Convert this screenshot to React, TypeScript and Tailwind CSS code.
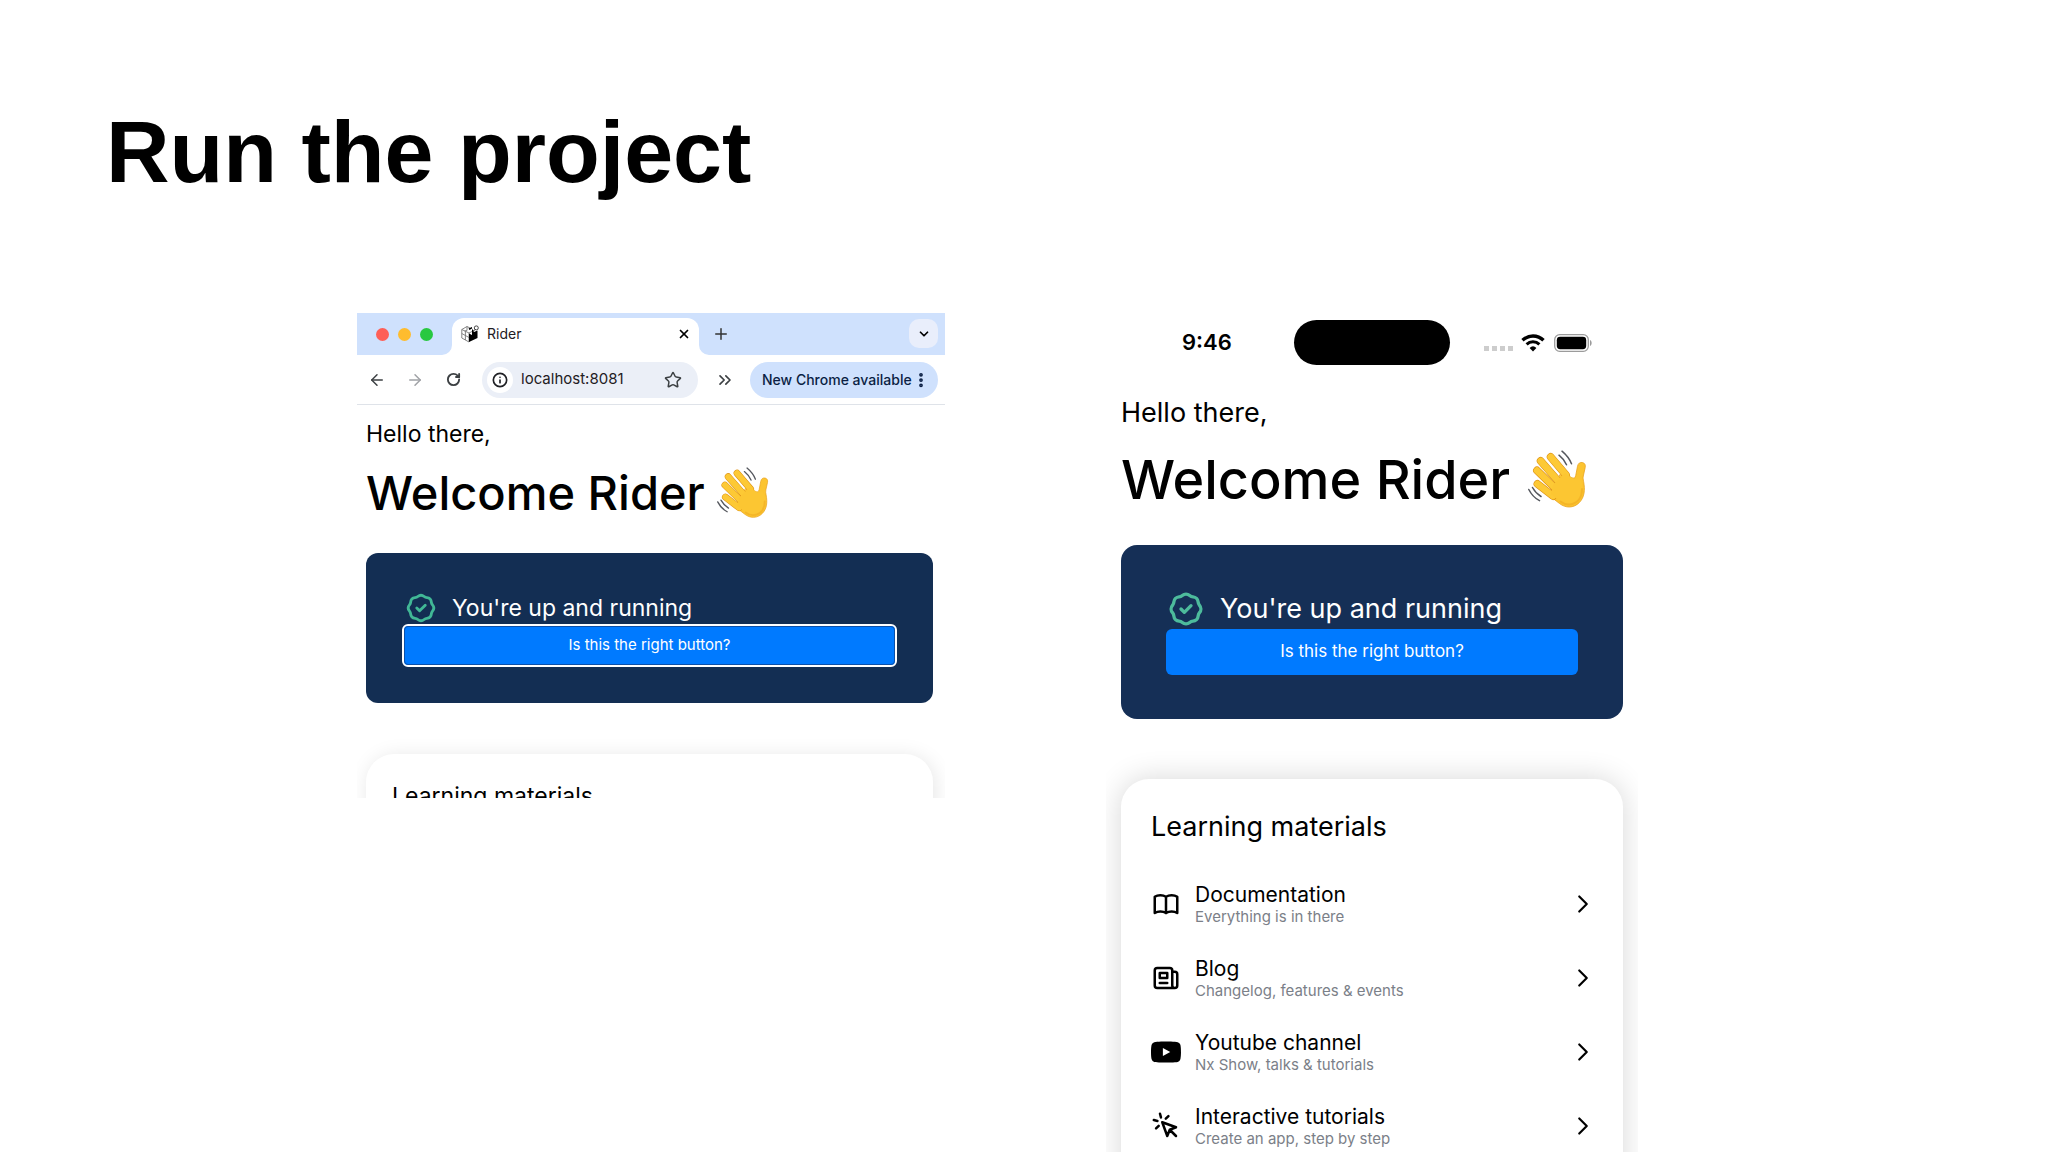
import type { ReactNode } from "react";
import {
  ArrowLeft,
  ArrowRight,
  ChevronDown,
  ChevronRight,
  ChevronsRight,
  EllipsisVertical,
  Info,
  Plus,
  RotateCw,
  Star,
  X,
} from "lucide-react";

type Material = {
  title: string;
  description: string;
  icon: ReactNode;
};

function OutlineIcon({ d, className }: { d: string; className: string }) {
  return (
    <svg
      className={className}
      viewBox="0 0 24 24"
      fill="none"
      stroke="currentColor"
      strokeWidth="2"
      strokeLinecap="round"
      strokeLinejoin="round"
      aria-hidden="true"
    >
      <path d={d} />
    </svg>
  );
}

const BADGE =
  "M9 12l2 2 4-4M7.835 4.697a3.42 3.42 0 001.946-.806 3.42 3.42 0 014.438 0 3.42 3.42 0 001.946.806 3.42 3.42 0 013.138 3.138 3.42 3.42 0 00.806 1.946 3.42 3.42 0 010 4.438 3.42 3.42 0 00-.806 1.946 3.42 3.42 0 01-3.138 3.138 3.42 3.42 0 00-1.946.806 3.42 3.42 0 01-4.438 0 3.42 3.42 0 00-1.946-.806 3.42 3.42 0 01-3.138-3.138 3.42 3.42 0 00-.806-1.946 3.42 3.42 0 010-4.438 3.42 3.42 0 00.806-1.946 3.42 3.42 0 013.138-3.138z";
const BOOK =
  "M12 6.253v13m0-13C10.832 5.477 9.246 5 7.5 5S4.168 5.477 3 6.253v13C4.168 18.477 5.754 18 7.5 18s3.332.477 4.5 1.253m0-13C13.168 5.477 14.754 5 16.5 5c1.747 0 3.332.477 4.5 1.253v13C19.832 18.477 18.247 18 16.5 18c-1.746 0-3.332.477-4.5 1.253";
const NEWSPAPER =
  "M19 20H5a2 2 0 01-2-2V6a2 2 0 012-2h10a2 2 0 012 2v1m2 13a2 2 0 01-2-2V7m2 13a2 2 0 002-2V9a2 2 0 00-2-2h-2m-4-3H9M7 16h6M7 8h6v4H7V8z";
const CURSOR =
  "M15 15l-2 5L9 9l11 4-5 2zm0 0l5 5M7.188 2.239l.777 2.897M5.136 7.965l-2.898-.777M13.95 4.05l-2.122 2.122m-5.657 5.656l-2.12 2.122";

const materials: Material[] = [
  {
    title: "Documentation",
    description: "Everything is in there",
    icon: <OutlineIcon d={BOOK} className="size-[30px]" />,
  },
  {
    title: "Blog",
    description: "Changelog, features & events",
    icon: <OutlineIcon d={NEWSPAPER} className="size-[30px]" />,
  },
  {
    title: "Youtube channel",
    description: "Nx Show, talks & tutorials",
    icon: (
      <svg className="size-[30px]" viewBox="0 0 24 24" fill="currentColor" aria-hidden="true">
        <path d="M23.5 6.2a3 3 0 00-2.1-2.1C19.5 3.6 12 3.6 12 3.6s-7.5 0-9.4.5A3 3 0 00.5 6.2C0 8.1 0 12 0 12s0 3.9.5 5.8a3 3 0 002.1 2.1c1.9.5 9.4.5 9.4.5s7.5 0 9.4-.5a3 3 0 002.1-2.1c.5-1.9.5-5.8.5-5.8s0-3.9-.5-5.8zM9.5 15.2V8.800l5.900 3.200z" />
      </svg>
    ),
  },
  {
    title: "Interactive tutorials",
    description: "Create an app, step by step",
    icon: <OutlineIcon d={CURSOR} className="size-[30px]" />,
  },
];

const FINGERS = [
  "M22.7 7L38 25",
  "M12.7 11L31 32",
  "M9 20.500L27 38",
  "M9.500 34L25 46",
];

function WavingHand({ className }: { className: string }) {
  return (
    <svg className={className} viewBox="0 0 60 60" role="img" aria-label="waving hand" strokeLinecap="round">
      <path
        d="M34 22l9.500 5.500c2.200 1.300 3.700.6 4.200-1.800l1.800-9.400c.6-3 2.500-4.300 4.900-3.800 2.500.5 3.300 2.600 2.800 5l-1.900 8.500c-.4 1.900-.1 3.500.3 5.500 1.600 8.500 1 15.800-4.400 21.200-5.600 5.600-13.600 5.600-19.700.8L20.500 45z"
        fill="#fcc430"
        stroke="#e9a21d"
        strokeWidth="0.800"
      />
      {FINGERS.map((d) => (
        <g key={d} fill="none">
          <path d={d} stroke="#dd9216" strokeWidth="7.800" />
          <path d={d} stroke="#fdc935" strokeWidth="6.600" />
        </g>
      ))}
      <path
        d="M37 23l7 5c3 2 6 1.500 7-1l3 6c1.500 8 .6 14-3.800 18.500-4.900 4.900-12 4.600-17.200.5L23 44l2-9 5-5z"
        fill="#fcc632"
      />
      <path d="M54 39c0 8-4 14.500-12.500 15.500-3 .3-6-.8-9-3" fill="none" stroke="#efaa20" strokeWidth="2" opacity="0.6" />
      <path
        d="M34 1.200c4.300 3.600 7.500 7.600 9.500 12.600M31 5.200c3.300 2.600 5.800 5.800 7.500 9.600M.8 39.500c2.500 5 6 8.700 10.700 11.200M4.500 37.500c2.200 4 5 6.900 8.500 9"
        fill="none"
        stroke="#55585e"
        strokeWidth="1.500"
      />
    </svg>
  );
}

function Favicon() {
  return (
    <svg className="size-[18px]" viewBox="0 0 18 18" fill="none" aria-hidden="true">
      <path
        d="M.8 4.500L6 1.500 9 3M.8 4.500V13L8 17V8zM8 8l3-1.500M.8 8.500L8 12.500M4.400 6.200V15M6 1.500v4L3.500 6"
        stroke="#777"
        strokeWidth="0.900"
      />
      <path d="M8 8.500l3 1.500V3.500L8.500 5 7.500 3.500 11 2v1.500L13 7l3.500-1.500V13L8 17z" fill="#000" />
      <circle cx="15.300" cy="2.900" r="2" fill="#fff" stroke="#333" strokeWidth="0.900" />
      <path d="M12 6l2.500-1.500" stroke="#333" strokeWidth="0.900" />
    </svg>
  );
}

function BrowserWindow() {
  return (
    <section className="col-start-2 h-[485px] self-start overflow-hidden bg-white">
      <div className="flex h-[42px] items-end bg-[#cfe1fd]">
        <div className="flex h-full w-[95px] items-center gap-[9px] pl-[19px]">
          <span className="size-[13px] rounded-full bg-[#fe5f57]" />
          <span className="size-[13px] rounded-full bg-[#febc2e]" />
          <span className="size-[13px] rounded-full bg-[#28c840]" />
        </div>
        <div className="relative flex h-[37px] w-[247px] items-center rounded-t-xl bg-white pb-[6px] pl-[9px]">
          <svg className="absolute bottom-0 -left-[10px] size-[10px]" viewBox="0 0 10 10" aria-hidden="true">
            <path d="M10 0v10H0A10 10 0 0010 0z" fill="#fff" />
          </svg>
          <svg className="absolute -right-[10px] bottom-0 size-[10px]" viewBox="0 0 10 10" aria-hidden="true">
            <path d="M0 0v10h10A10 10 0 010 0z" fill="#fff" />
          </svg>
          <Favicon />
          <span className="ml-2 text-sm text-[#1f2024]">Rider</span>
          <button className="mr-2 ml-auto" aria-label="Close tab">
            <X className="size-[14px]" strokeWidth={3} />
          </button>
        </div>
        <button className="mb-3 ml-[13px] text-[#333]" aria-label="New tab">
          <Plus className="size-[18px]" strokeWidth={2} />
        </button>
        <button
          className="mr-[7px] mb-[7px] ml-auto flex size-[29px] items-center justify-center rounded-[10px] bg-[#e9eefb]"
          aria-label="Search tabs"
        >
          <ChevronDown className="size-[14px]" strokeWidth={3} />
        </button>
      </div>

      <div className="flex h-[50px] items-center border-b border-[#dfe3e9] pr-[7px] pl-[11px] text-[#3c4043]">
        <button aria-label="Back">
          <ArrowLeft className="size-[18px]" strokeWidth={2} />
        </button>
        <button className="ml-5 text-[#a0a2a6]" aria-label="Forward">
          <ArrowRight className="size-[18px]" strokeWidth={2} />
        </button>
        <button className="ml-[22px]" aria-label="Reload">
          <RotateCw className="size-[15px]" strokeWidth={3} />
        </button>
        <div className="ml-[21px] flex h-9 w-[216px] items-center rounded-full bg-[#ebeff7] pr-4 pl-[5px]">
          <span className="flex size-[26px] shrink-0 items-center justify-center rounded-full bg-white">
            <Info className="size-4 text-[#1f2024]" strokeWidth={2.5} />
          </span>
          <input
            className="ml-2 w-full min-w-0 bg-transparent text-[15px] text-[#1f2024] outline-none"
            aria-label="Address"
            defaultValue="localhost:8081"
          />
          <button aria-label="Bookmark this tab">
            <Star className="size-[18px]" strokeWidth={2} />
          </button>
        </div>
        <ChevronsRight className="ml-[17px] size-5" strokeWidth={2} />
        <button className="ml-auto flex h-9 w-[188px] items-center justify-between rounded-full bg-[#cfe1fd] pr-2 pl-3 text-sm font-medium text-[#0b1f44]">
          New Chrome available
          <EllipsisVertical className="size-[18px]" strokeWidth={3} />
        </button>
      </div>

      <div className="pt-3 pr-3 pl-[9px]">
        <p className="text-[23px] leading-[34px]">Hello there,</p>
        <h2 className="mt-[10px] flex items-center gap-3 text-[47px] leading-[64px] font-medium">
          Welcome Rider
          <WavingHand className="size-[53px]" />
        </h2>

        <div className="mt-[28px] rounded-xl bg-[#132e53] px-9 pt-[39px] pb-9 text-white">
          <div className="flex h-8 items-center gap-[14px] pl-0.5">
            <OutlineIcon d={BADGE} className="size-[34px] text-[#41b896]" />
            <p className="text-[23px]">You're up and running</p>
          </div>
          <button className="h-[43px] w-full rounded-md border-2 border-white bg-[#007aff] text-[15px] outline-1 outline-[#0b4fa8] -outline-offset-3">
            Is this the right button?
          </button>
        </div>

        <div className="mt-[51px] rounded-[28px] bg-white px-[26px] pt-6 pb-10 shadow-[2px_2px_20px_rgba(0,0,0,0.1)]">
          <h3 className="text-[23px] leading-[36px]">Learning materials</h3>
        </div>
      </div>
    </section>
  );
}

function StatusBar() {
  return (
    <div className="flex h-[45px] items-center">
      <span className="w-[173px] pl-[61px] text-[22px] font-semibold">9:46</span>
      <span className="h-full w-[156px] rounded-full bg-black" />
      <span className="mt-3 ml-[34px] flex gap-[3px]">
        <i className="size-[5px] bg-[#cdcdcd]" />
        <i className="size-[5px] bg-[#cdcdcd]" />
        <i className="size-[5px] bg-[#cdcdcd]" />
        <i className="size-[5px] bg-[#cdcdcd]" />
      </span>
      <svg className="ml-2 h-[18px] w-6" viewBox="0 0 24 18" fill="none" aria-hidden="true">
        <path d="M1.500 6.300a15 15 0 0121 0" stroke="#000" strokeWidth="3.400" />
        <path d="M5.600 10.400a9.200 9.200 0 0112.800 0" stroke="#000" strokeWidth="3" />
        <path d="M12 17.500l-3.400-3.600a5 5 0 016.800 0z" fill="#000" />
      </svg>
      <svg className="ml-[9px] h-[18px] w-[38px]" viewBox="0 0 38 18" fill="none" aria-hidden="true">
        <rect x="0.700" y="0.700" width="33.600" height="16.600" rx="5" stroke="#9b9b9b" strokeWidth="1.300" />
        <rect x="2.800" y="2.800" width="29.400" height="12.400" rx="3.400" fill="#000" />
        <path d="M36 6c2.200 1 2.200 5 0 6z" fill="#9b9b9b" />
      </svg>
    </div>
  );
}

function PhoneScreen() {
  return (
    <section className="col-start-4 self-start overflow-hidden bg-white px-[15px] pt-[7px]">
      <StatusBar />

      <p className="mt-[29px] text-[27px] leading-[38px]">Hello there,</p>
      <h2 className="mt-[10px] flex items-center gap-[18px] text-[54px] leading-[76px] font-medium">
        Welcome Rider
        <WavingHand className="size-[60px]" />
      </h2>

      <div className="mt-[27px] rounded-2xl bg-[#152f56] px-[45px] py-11 text-white">
        <div className="flex h-10 items-center gap-[14px]">
          <OutlineIcon d={BADGE} className="size-10 text-[#4dbb9c]" />
          <p className="text-[27px]">You're up and running</p>
        </div>
        <button className="h-[46px] w-full rounded-md bg-[#007aff] text-[17px]">
          Is this the right button?
        </button>
      </div>

      <div className="mt-[60px] rounded-[28px] bg-white px-[30px] pt-7 pb-10 shadow-[0_0_30px_rgba(0,0,0,0.16)]">
        <h3 className="text-[27px] leading-[40px]">Learning materials</h3>
        <ul className="mt-5">
          {materials.map(({ title, description, icon }) => (
            <li key={title}>
              <a className="flex h-[74px] items-center" href="#">
                {icon}
                <span className="ml-[14px] flex flex-col">
                  <span className="text-[21px] leading-[26px]">{title}</span>
                  <span className="text-[15px] leading-[18px] text-[#7b8088]">{description}</span>
                </span>
                <ChevronRight className="-mr-[5px] ml-auto size-[30px]" strokeWidth={1.75} />
              </a>
            </li>
          ))}
        </ul>
      </div>
    </section>
  );
}

export default function App() {
  return (
    <main className="flex h-screen flex-col overflow-hidden bg-white font-['Inter','Liberation_Sans',sans-serif] text-black">
      <h1 className="px-[106px] pt-[102px] font-['Liberation_Sans',Arial,sans-serif] text-[88px] leading-[100px] font-bold">
        Run the project
      </h1>
      <div className="mt-[111px] grid grid-cols-[357fr_588fr_161fr_532fr_410fr]">
        <BrowserWindow />
        <PhoneScreen />
      </div>
    </main>
  );
}
